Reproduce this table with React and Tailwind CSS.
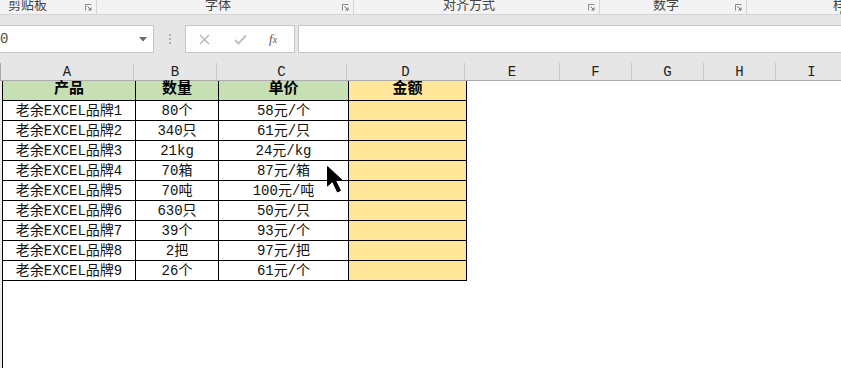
const rows = [
  ['老余EXCEL品牌1', '80个', '58元/个'],
  ['老余EXCEL品牌2', '340只', '61元/只'],
  ['老余EXCEL品牌3', '21kg', '24元/kg'],
  ['老余EXCEL品牌4', '70箱', '87元/箱'],
  ['老余EXCEL品牌5', '70吨', '100元/吨'],
  ['老余EXCEL品牌6', '630只', '50元/只'],
  ['老余EXCEL品牌7', '39个', '93元/个'],
  ['老余EXCEL品牌8', '2把', '97元/把'],
  ['老余EXCEL品牌9', '26个', '61元/个'],
];

const cellFont = { fontFamily: '"Liberation Mono", "Noto Sans CJK SC", monospace' };
const uiFont = { fontFamily: '"Noto Sans CJK SC", sans-serif' };

const columns = [
  { key: 'A', w: 'w-[133px]' },
  { key: 'B', w: 'w-[83px]' },
  { key: 'C', w: 'w-[130px]' },
  { key: 'D', w: 'w-[118px]' },
  { key: 'E', w: 'w-[95px]' },
  { key: 'F', w: 'w-[72px]' },
  { key: 'G', w: 'w-[72px]' },
  { key: 'H', w: 'w-[72px]' },
  { key: 'I', w: 'w-[72px]' },
];

function Launcher() {
  return (
    <svg width="7" height="7" viewBox="0 0 7 7" className="mt-[4px]">
      <path d="M0.5 6.5V0.5H6.5" fill="none" stroke="#8a8a8a" />
      <path d="M2.5 2.5L6 6M6 3.5V6H3.5" fill="none" stroke="#6a6a6a" />
    </svg>
  );
}

function RibbonGroup({ width, label, labelLeft, last }) {
  return (
    <div className={`flex h-full shrink-0 ${width} ${last ? '' : 'border-r border-[#d4d4d4]'}`}>
      <span className={`${labelLeft} -mt-[3px] leading-none text-[13px] text-[#444]`}>{label}</span>
      {!last && <div className="ml-auto mr-[4px]"><Launcher /></div>}
    </div>
  );
}

function Cursor() {
  return (
    <svg className="absolute left-[326px] top-[165px]" width="20" height="30" viewBox="0 0 20 30">
      <path d="M1.5 1.5 L1.5 21 L6.5 16.5 L11.5 27 L14.5 25.5 L9.5 15.5 L16.5 15.5 Z" fill="#000" stroke="#000" strokeWidth="1" strokeLinejoin="miter" />
    </svg>
  );
}

export default function App() {
  return (
    <div className="relative w-[841px] h-[368px] overflow-hidden bg-white" style={uiFont}>
      {/* ribbon group labels */}
      <div className="flex h-[15px] bg-[#f3f3f3] border-b border-[#d4d4d4] overflow-hidden">
        <RibbonGroup width="w-[97px]" label="剪贴板" labelLeft="ml-[8px]" />
        <RibbonGroup width="w-[257px]" label="字体" labelLeft="ml-[108px]" />
        <RibbonGroup width="w-[246px]" label="对齐方式" labelLeft="ml-[89px]" />
        <RibbonGroup width="w-[147px]" label="数字" labelLeft="ml-[53px]" />
        <RibbonGroup width="w-[94px]" label="样式" labelLeft="ml-[86px]" last />
      </div>

      {/* formula bar */}
      <div className="bg-[#e6e6e6] pt-[10px] pb-[10px]">
        <div className="flex h-[28px] items-stretch">
          <div className="flex w-[154px] items-center bg-white border border-l-0 border-[#c6c6c6]">
            <span className="text-[14px] text-[#5a4a3a] leading-none" style={cellFont}>0</span>
            <svg className="ml-auto mr-[6px]" width="8" height="5" viewBox="0 0 8 5">
              <path d="M0 0H8L4 4.5Z" fill="#6a6a6a" />
            </svg>
          </div>
          <div className="flex w-[31px] flex-col items-center justify-center gap-[2px]">
            <span className="w-[2px] h-[2px] bg-[#b0b0b0]" />
            <span className="w-[2px] h-[2px] bg-[#b0b0b0]" />
            <span className="w-[2px] h-[2px] bg-[#b0b0b0]" />
          </div>
          <div className="flex w-[110px] items-center bg-white border border-[#c6c6c6]">
            <svg className="ml-[13px]" width="11" height="11" viewBox="0 0 11 11">
              <path d="M1 1L10 10M10 1L1 10" stroke="#b5b5b5" strokeWidth="1.4" />
            </svg>
            <svg className="ml-[24px]" width="13" height="11" viewBox="0 0 13 11">
              <path d="M1 6L4.5 9.5L12 1.5" fill="none" stroke="#c2c2c2" strokeWidth="2" />
            </svg>
            <span className="ml-[22px] text-[13px] italic text-[#555]" style={{ fontFamily: '"Liberation Serif", serif' }}>
              f<span className="text-[10px]">x</span>
            </span>
          </div>
          <div className="ml-[3px] flex-1 bg-white border border-r-0 border-[#c6c6c6]" />
        </div>
      </div>

      {/* column headers */}
      <div className="flex h-[18px] bg-[#e6e6e6] border-b border-[#ababab]" style={cellFont}>
        <div className="w-[3px] border-r border-[#ababab]" />
        {columns.map((c) => (
          <div key={c.key} className={`${c.w} shrink-0 flex items-center justify-center border-r border-[#c8c8c8] text-[14px] text-[#222] leading-none`}>
            {c.key}
          </div>
        ))}
      </div>

      {/* sheet body */}
      <div className="flex">
        <div className="w-[2px] h-[300px] bg-[#ececec]" />
        <div className="flex flex-col border-l border-black" style={cellFont}>
          <div className="flex h-[20px] text-[15px] font-bold text-black">
            <div className="w-[133px] flex items-center justify-center bg-[#c6e0b4] border-r border-b border-black">产品</div>
            <div className="w-[83px] flex items-center justify-center bg-[#c6e0b4] border-r border-b border-black">数量</div>
            <div className="w-[130px] flex items-center justify-center bg-[#c6e0b4] border-r border-b border-black">单价</div>
            <div className="w-[118px] flex items-center justify-center bg-[#ffe699] border-r border-b border-black">金额</div>
          </div>
          {rows.map((r) => (
            <div key={r[0]} className="flex h-[20px] text-[14px] text-[#111] leading-none">
              <div className="w-[133px] flex items-center justify-center border-r border-b border-black">{r[0]}</div>
              <div className="w-[83px] flex items-center justify-center border-r border-b border-black">{r[1]}</div>
              <div className="w-[130px] flex items-center justify-center border-r border-b border-black">{r[2]}</div>
              <div className="w-[118px] bg-[#ffe699] border-r border-b border-black" />
            </div>
          ))}
        </div>
      </div>

      <Cursor />
    </div>
  );
}
